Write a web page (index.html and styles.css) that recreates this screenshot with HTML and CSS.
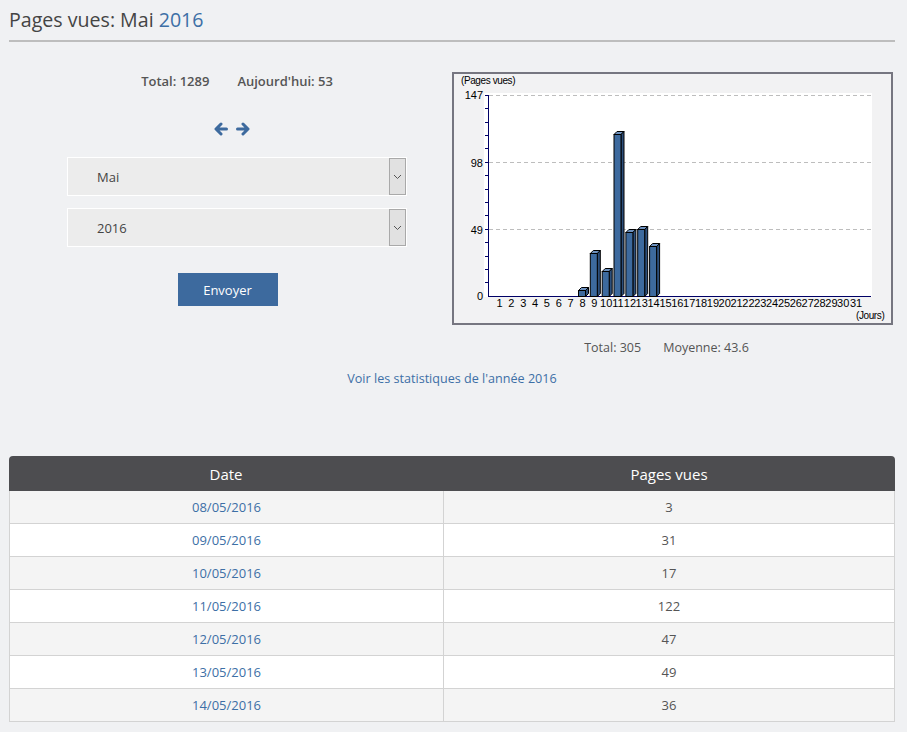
FILE: index.html
```html
<!DOCTYPE html>
<html lang="fr">
<head>
<meta charset="utf-8">
<title>Pages vues: Mai 2016</title>
<link rel="stylesheet" href="styles.css">
</head>
<body>
<div class="page">
  <h1 class="title">Pages vues: Mai <span class="accent">2016</span></h1>

  <div class="top">
    <div class="left">
      <div class="stats"><span>Total: 1289</span><span>Aujourd'hui: 53</span></div>
      <div class="nav">
        <svg width="14" height="14" viewBox="0 0 14 14"><path d="M7 2 L2 7 L7 12 M2.5 7 H12.5" fill="none" stroke="#3d6a9e" stroke-width="3" stroke-linecap="round" stroke-linejoin="round"/></svg>
        <svg width="14" height="14" viewBox="0 0 14 14"><path d="M7 2 L12 7 L7 12 M11.5 7 H1.5" fill="none" stroke="#3d6a9e" stroke-width="3" stroke-linecap="round" stroke-linejoin="round"/></svg>
      </div>
      <div class="select"><span class="value">Mai</span><span class="arrow"><svg width="9" height="6" viewBox="0 0 9 6"><path d="M1 1 L4.5 4.5 L8 1" fill="none" stroke="#555" stroke-width="1"/></svg></span></div>
      <div class="select"><span class="value">2016</span><span class="arrow"><svg width="9" height="6" viewBox="0 0 9 6"><path d="M1 1 L4.5 4.5 L8 1" fill="none" stroke="#555" stroke-width="1"/></svg></span></div>
      <button class="btn" type="button">Envoyer</button>
    </div>

    <div class="right">
      <svg class="chart" width="441" height="253" viewBox="452 72 441 253">
        <rect x="453" y="73" width="439" height="251" fill="#f2f2f3" stroke="#767680" stroke-width="2"/>
        <rect x="484" y="93" width="388" height="204" fill="#ffffff"/>
        <g stroke="#bdbdbd" stroke-width="1" stroke-dasharray="4 3">
          <line x1="489" y1="95.5" x2="871" y2="95.5"/>
          <line x1="489" y1="162.5" x2="871" y2="162.5"/>
          <line x1="489" y1="229.5" x2="871" y2="229.5"/>
        </g>
        <g stroke="#000066" stroke-width="1">
          <line x1="488.5" y1="95" x2="488.5" y2="297"/>
          <line x1="488" y1="296.5" x2="871" y2="296.5"/>
          <line x1="485" y1="95.5" x2="488" y2="95.5"/>
          <line x1="485" y1="108.5" x2="488" y2="108.5"/>
          <line x1="485" y1="122.5" x2="488" y2="122.5"/>
          <line x1="485" y1="135.5" x2="488" y2="135.5"/>
          <line x1="485" y1="148.5" x2="488" y2="148.5"/>
          <line x1="485" y1="162.5" x2="488" y2="162.5"/>
          <line x1="485" y1="175.5" x2="488" y2="175.5"/>
          <line x1="485" y1="189.5" x2="488" y2="189.5"/>
          <line x1="485" y1="202.5" x2="488" y2="202.5"/>
          <line x1="485" y1="215.5" x2="488" y2="215.5"/>
          <line x1="485" y1="229.5" x2="488" y2="229.5"/>
          <line x1="485" y1="242.5" x2="488" y2="242.5"/>
          <line x1="485" y1="256.5" x2="488" y2="256.5"/>
          <line x1="485" y1="269.5" x2="488" y2="269.5"/>
          <line x1="485" y1="282.5" x2="488" y2="282.5"/>
        </g>
        <g class="ax" text-anchor="end">
          <text x="483" y="99">147</text>
          <text x="483" y="167">98</text>
          <text x="483" y="234">49</text>
          <text x="483" y="300">0</text>
        </g>
        <text class="axs" x="461" y="84">(Pages vues)</text>
        <text class="axs" x="856" y="319">(Jours)</text>
        <g class="ax" text-anchor="middle">
          <text x="499.5" y="307">1</text><text x="511.4" y="307">2</text><text x="523.2" y="307">3</text><text x="535.1" y="307">4</text><text x="546.9" y="307">5</text><text x="558.8" y="307">6</text><text x="570.6" y="307">7</text><text x="582.5" y="307">8</text><text x="594.3" y="307">9</text><text x="606.2" y="307">10</text><text x="618" y="307">11</text><text x="629.9" y="307">12</text><text x="641.7" y="307">13</text><text x="653.6" y="307">14</text><text x="665.5" y="307">15</text><text x="677.3" y="307">16</text><text x="689.2" y="307">17</text><text x="701" y="307">18</text><text x="712.9" y="307">19</text><text x="724.7" y="307">20</text><text x="736.6" y="307">21</text><text x="748.4" y="307">22</text><text x="760.3" y="307">23</text><text x="772.1" y="307">24</text><text x="784" y="307">25</text><text x="795.8" y="307">26</text><text x="807.7" y="307">27</text><text x="819.5" y="307">28</text><text x="831.4" y="307">29</text><text x="843.2" y="307">30</text><text x="856.1" y="307">31</text>
        </g>
        <g stroke="#000" stroke-width="1" stroke-linejoin="miter">
          <polygon points="578.5,290.5 581.5,287.5 588.5,287.5 585.5,290.5" fill="#6d91be"/>
          <polygon points="585.5,290.5 588.5,287.5 588.5,293.5 585.5,296.5" fill="#2c4f7c"/>
          <rect x="578.5" y="290.5" width="7" height="6" fill="#3d6a9e"/>
          <polygon points="590.3,253.5 593.3,250.5 600.3,250.5 597.3,253.5" fill="#6d91be"/>
          <polygon points="597.3,253.5 600.3,250.5 600.3,293.5 597.3,296.5" fill="#2c4f7c"/>
          <rect x="590.3" y="253.5" width="7" height="43" fill="#3d6a9e"/>
          <polygon points="602.2,271.5 605.2,268.5 612.2,268.5 609.2,271.5" fill="#6d91be"/>
          <polygon points="609.2,271.5 612.2,268.5 612.2,293.5 609.2,296.5" fill="#2c4f7c"/>
          <rect x="602.2" y="271.5" width="7" height="25" fill="#3d6a9e"/>
          <polygon points="614,134.5 617,131.5 624,131.5 621,134.5" fill="#6d91be"/>
          <polygon points="621,134.5 624,131.5 624,293.5 621,296.5" fill="#2c4f7c"/>
          <rect x="614" y="134.5" width="7" height="162" fill="#3d6a9e"/>
          <polygon points="625.9,232.5 628.9,229.5 635.9,229.5 632.9,232.5" fill="#6d91be"/>
          <polygon points="632.9,232.5 635.9,229.5 635.9,293.5 632.9,296.5" fill="#2c4f7c"/>
          <rect x="625.9" y="232.5" width="7" height="64" fill="#3d6a9e"/>
          <polygon points="637.7,229.5 640.7,226.5 647.7,226.5 644.7,229.5" fill="#6d91be"/>
          <polygon points="644.7,229.5 647.7,226.5 647.7,293.5 644.7,296.5" fill="#2c4f7c"/>
          <rect x="637.7" y="229.5" width="7" height="67" fill="#3d6a9e"/>
          <polygon points="649.6,246.5 652.6,243.5 659.6,243.5 656.6,246.5" fill="#6d91be"/>
          <polygon points="656.6,246.5 659.6,243.5 659.6,293.5 656.6,296.5" fill="#2c4f7c"/>
          <rect x="649.6" y="246.5" width="7" height="50" fill="#3d6a9e"/>
        </g>
      </svg>
      <div class="stats chart-stats"><span>Total: 305</span><span>Moyenne: 43.6</span></div>
    </div>
  </div>

  <p class="year-link"><a href="#">Voir les statistiques de l'année 2016</a></p>

  <table class="data">
    <thead>
      <tr><th>Date</th><th>Pages vues</th></tr>
    </thead>
    <tbody>
      <tr><td><a href="#">08/05/2016</a></td><td>3</td></tr>
      <tr><td><a href="#">09/05/2016</a></td><td>31</td></tr>
      <tr><td><a href="#">10/05/2016</a></td><td>17</td></tr>
      <tr><td><a href="#">11/05/2016</a></td><td>122</td></tr>
      <tr><td><a href="#">12/05/2016</a></td><td>47</td></tr>
      <tr><td><a href="#">13/05/2016</a></td><td>49</td></tr>
      <tr><td><a href="#">14/05/2016</a></td><td>36</td></tr>
    </tbody>
  </table>
</div>
</body>
</html>
```

FILE: styles.css
```css
html, body {
  margin: 0;
  padding: 0;
  background: #f0f1f3;
}
body {
  font-family: "Open Sans", "DejaVu Sans", sans-serif;
  color: #505050;
  font-size: 13px;
}
.page {
  padding: 0 12px 0 9px;
}
.title {
  margin: 0;
  padding-top: 7px;
  height: 42px;
  box-sizing: border-box;
  font-size: 19.6px;
  font-weight: 500;
  line-height: 26px;
  color: #444;
  border-bottom: 2px solid #bdbdbd;
}
.accent { color: #3d6fa6; }

.top {
  display: flex;
  margin-top: 30px;
}
.left {
  width: 443px;
  box-sizing: border-box;
  padding-left: 13px;
  display: flex;
  flex-direction: column;
  align-items: center;
}
.stats {
  display: flex;
  gap: 28px;
  font-weight: 600;
  color: #555;
  line-height: 18px;
}
.nav {
  margin-top: 32px;
  margin-right: 10px;
  display: flex;
  gap: 8px;
  height: 14px;
}
.select {
  margin-top: 12px;
  width: 340px;
  height: 39px;
  box-sizing: border-box;
  border: 1px solid #fff;
  background: #ececec;
  display: flex;
  align-items: stretch;
}
.nav + .select { margin-top: 21px; }
.select .value {
  flex: 1;
  padding-left: 29px;
  display: flex;
  align-items: center;
  color: #444;
}
.select .arrow {
  width: 15px;
  border: 1px solid #a9a9a9;
  background: #e1e1e1;
  display: flex;
  align-items: center;
  justify-content: center;
}
.btn {
  margin-top: 26px;
  margin-right: 19px;
  width: 100px;
  height: 33px;
  border: 0;
  background: #3d6a9e;
  color: #fff;
  font-family: inherit;
  font-size: 13px;
  padding: 0;
}
.right {
  width: 441px;
  display: flex;
  flex-direction: column;
  align-items: center;
}
.chart { display: block; }
.chart .ax { font-family: "Liberation Sans", Arial, sans-serif; font-size: 11px; fill: #000; }
.chart .axs { font-family: "Liberation Sans", Arial, sans-serif; font-size: 10px; fill: #000; letter-spacing: -0.4px; }
.chart-stats {
  margin-top: 14px;
  padding-right: 12px;
  gap: 22px;
  font-size: 12.5px;
  font-weight: normal;
}
.year-link {
  margin: 13px 0 0;
  text-align: center;
  line-height: 18px;
  font-size: 12.6px;
}
a { color: #3d6fa6; text-decoration: none; }

.data {
  margin-top: 68px;
  width: 100%;
  border-collapse: separate;
  border-spacing: 0;
  font-size: 13px;
}
.data th {
  background: #4d4d50;
  color: #fff;
  font-weight: normal;
  font-size: 15px;
  height: 35px;
  padding: 0;
}
.data th:first-child { border-top-left-radius: 4px; width: 434px; }
.data th:last-child { border-top-right-radius: 4px; }
.data td {
  height: 32px;
  padding: 0;
  text-align: center;
  border-bottom: 1px solid #d3d3d3;
  border-left: 1px solid #d3d3d3;
  color: #555;
}
.data td:last-child { border-right: 1px solid #d3d3d3; }
.data tbody tr:nth-child(odd) td { background: #f4f4f4; }
.data tbody tr:nth-child(even) td { background: #ffffff; }
```
